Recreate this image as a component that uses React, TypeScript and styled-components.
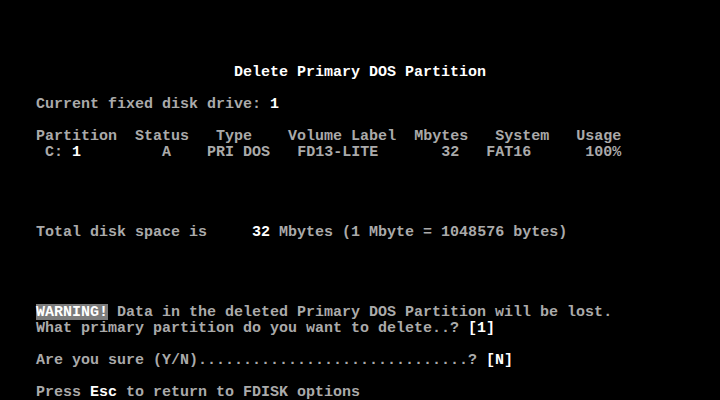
import * as React from 'react';
import styled, { createGlobalStyle } from 'styled-components';

const GlobalStyle = createGlobalStyle`
  html, body {
    margin: 0;
    padding: 0;
    background: #000;
  }
`;

const Screen = styled.div`
  width: 720px;
  height: 400px;
  background: #000;
  display: grid;
  grid-template-rows: repeat(25, 16px);
  font-family: 'Liberation Mono', 'DejaVu Sans Mono', monospace;
  font-size: 15px;
  font-weight: bold;
  color: #aaaaaa;
  overflow: hidden;
`;

const Line = styled.div`
  height: 16px;
  line-height: 18px;
  white-space: pre;
`;

const Seg = styled.span<{ $hi?: boolean; $inv?: boolean }>`
  color: ${(p) => (p.$hi || p.$inv ? '#ffffff' : 'inherit')};
  background: ${(p) => (p.$inv ? '#7c7c7c' : 'transparent')};
  display: inline-block;
  height: 16px;
  line-height: 17px;
`;

interface ISeg {
  c: number;
  t: string;
  hi?: boolean;
  inv?: boolean;
}

// row -> segments at text-mode columns
const screen: Record<number, ISeg[]> = {
  4: [{ c: 26, t: 'Delete Primary DOS Partition', hi: true }],
  6: [
    { c: 4, t: 'Current fixed disk drive: ' },
    { c: 30, t: '1', hi: true },
  ],
  8: [
    { c: 4, t: 'Partition' },
    { c: 15, t: 'Status' },
    { c: 24, t: 'Type' },
    { c: 32, t: 'Volume Label' },
    { c: 46, t: 'Mbytes' },
    { c: 55, t: 'System' },
    { c: 64, t: 'Usage' },
  ],
  9: [
    { c: 5, t: 'C:' },
    { c: 8, t: '1', hi: true },
    { c: 18, t: 'A' },
    { c: 23, t: 'PRI DOS' },
    { c: 33, t: 'FD13-LITE' },
    { c: 49, t: '32' },
    { c: 54, t: 'FAT16' },
    { c: 65, t: '100%' },
  ],
  14: [
    { c: 4, t: 'Total disk space is' },
    { c: 28, t: '32', hi: true },
    { c: 31, t: 'Mbytes (1 Mbyte = 1048576 bytes)' },
  ],
  19: [
    { c: 4, t: 'WARNING!', inv: true },
    { c: 13, t: 'Data in the deleted Primary DOS Partition will be lost.' },
  ],
  20: [
    { c: 4, t: 'What primary partition do you want to delete..?' },
    { c: 52, t: '[1]', hi: true },
  ],
  22: [
    { c: 4, t: 'Are you sure (Y/N)' + '.'.repeat(30) + '?' },
    { c: 54, t: '[N]', hi: true },
  ],
  24: [
    { c: 4, t: 'Press ' },
    { c: 10, t: 'Esc', hi: true },
    { c: 14, t: 'to return to FDISK options' },
  ],
};

function TextRow({ segs }: { segs: ISeg[] }) {
  let col = 0;
  const parts: React.ReactNode[] = [];
  segs.forEach((s, i) => {
    if (s.c > col) parts.push(' '.repeat(s.c - col));
    parts.push(
      <Seg key={i} $hi={s.hi} $inv={s.inv}>
        {s.t}
      </Seg>
    );
    col = s.c + s.t.length;
  });
  return <Line>{parts}</Line>;
}

export default function App() {
  const rows = Array.from({ length: 25 }, (_, r) => r);
  return (
    <>
      <GlobalStyle />
      <Screen>
        {rows.map((r) => (screen[r] ? <TextRow key={r} segs={screen[r]} /> : <Line key={r} />))}
      </Screen>
    </>
  );
}
